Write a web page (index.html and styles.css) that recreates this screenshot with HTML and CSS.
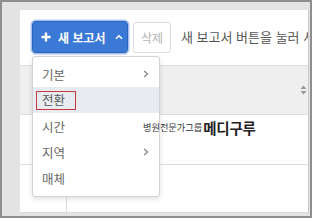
FILE: index.html
```html
<!DOCTYPE html>
<html lang="ko">
<head>
<meta charset="utf-8">
<link rel="stylesheet" href="styles.css">
</head>
<body>
<div class="frame">
  <div class="panel">
    <div class="toolbar">
      <div class="btn-wrap">
        <button class="btn-primary">
          <svg class="ico-plus" width="10" height="10" viewBox="0 0 10 10"><path d="M5 0.5V9.5M0.5 5H9.5" stroke="#fff" stroke-width="2.4"/></svg>
          <span>새 보고서</span>
          <svg class="ico-up" width="8" height="6" viewBox="0 0 8 6"><path d="M1 4.8L4 1.8L7 4.8" fill="none" stroke="#fff" stroke-width="1.6"/></svg>
        </button>
        <ul class="menu">
          <li class="item">기본<svg class="ico-right" width="6" height="8" viewBox="0 0 6 8"><path d="M1.2 1L4.5 4L1.2 7" fill="none" stroke="#888" stroke-width="1.3"/></svg></li>
          <li class="item active"><span class="mark">전환</span></li>
          <li class="item">시간</li>
          <li class="item">지역<svg class="ico-right" width="6" height="8" viewBox="0 0 6 8"><path d="M1.2 1L4.5 4L1.2 7" fill="none" stroke="#888" stroke-width="1.3"/></svg></li>
          <li class="item">매체</li>
        </ul>
      </div>
      <button class="btn-delete">삭제</button>
      <span class="hint">새 보고서 버튼을 눌러 사용하세요</span>
    </div>
    <div class="thead">
      <svg class="ico-sort" width="7" height="10" viewBox="0 0 7 10"><path d="M3.5 0.5L6.5 4H0.5Z M3.5 9.5L6.5 6H0.5Z" fill="#999"/></svg>
    </div>
    <div class="row row-first">
      <div class="cell-a"></div>
      <div class="cell-b"><span class="logo"><span class="logo-sub">병원전문가그룹</span><span class="logo-main">메디구루</span></span></div>
    </div>
    <div class="row row-last">
      <div class="cell-a"></div>
      <div class="cell-b"></div>
    </div>
  </div>
</div>
</body>
</html>
```
FILE: styles.css
```css
* { box-sizing: border-box; }
html, body { margin: 0; padding: 0; background: #fff; }
body {
  width: 314px;
  height: 221px;
  overflow: hidden;
  font-family: "Noto Sans CJK KR", "Noto Sans", sans-serif;
}
.frame {
  width: 312px;
  height: 218px;
  border: 2px solid #8e8e8e;
  background: #e3e3e3;
  padding: 8px 1px 3px 18px;
  display: flex;
}
.panel {
  flex: 1;
  min-width: 0;
  background: #fff;
  display: flex;
  flex-direction: column;
  border-right: 1px solid #c9c9c9;
  overflow: hidden;
}
.toolbar {
  height: 55px;
  flex: none;
  display: flex;
  align-items: flex-start;
  padding: 11px 0 0 12px;
  white-space: nowrap;
}
.btn-wrap { position: relative; flex: none; }
.btn-primary {
  height: 32px;
  width: 96px;
  margin: 0;
  padding: 0 0 0 8px;
  border: 1px solid #2c64bd;
  border-radius: 4px;
  background: #3a79d6;
  color: #fff;
  font-family: inherit;
  font-size: 12px;
  font-weight: 700;
  display: flex;
  align-items: center;
  box-shadow: 0 0 0 1.5px #a9c3ee;
}
.ico-plus { margin-right: 7px; }
.ico-up { margin-left: 9px; }
.menu {
  position: absolute;
  left: 0;
  top: 35px;
  width: 128px;
  margin: 0;
  padding: 4px 0 5px;
  list-style: none;
  background: #fff;
  border: 1px solid #d4d4d4;
  border-radius: 3px;
  box-shadow: 0 2px 5px rgba(0,0,0,0.12);
  z-index: 1;
}
.item {
  height: 26px;
  display: flex;
  align-items: center;
  justify-content: space-between;
  padding: 0 10px 0 9px;
  font-size: 12.5px;
  color: #666;
}
.item.active { background: #e8ebef; padding-left: 3px; }
.mark {
  border: 1.5px solid #c9363d;
  padding: 0 5px;
  height: 19px;
  width: 40px;
  line-height: 16px;
  color: #555;
}
.btn-delete {
  flex: none;
  margin: 1px 0 0 5px;
  height: 31px;
  width: 38px;
  padding: 0;
  border: 1px solid #dcdcdc;
  border-radius: 3px;
  background: #fff;
  color: #b4b4b4;
  font-family: inherit;
  font-size: 12px;
}
.hint {
  flex: none;
  margin-left: 10px;
  line-height: 32px;
  font-size: 13px;
  color: #555;
}
.thead {
  height: 50px;
  flex: none;
  border-top: 1px solid #dedede;
  border-bottom: 1px solid #dedede;
  background: #efefef;
  display: flex;
  align-items: center;
  justify-content: flex-end;
  padding-right: 1px;
}
.row {
  display: flex;
  border-bottom: 1px solid #dcdcdc;
}
.row-first { height: 50px; flex: none; }
.row-last { height: 48px; flex: none; }
.cell-a { width: 47px; border-right: 1px solid #dcdcdc; flex: none; }
.cell-b { flex: 1; display: flex; align-items: flex-start; padding: 5px 0 0 76px; }
.logo {
  position: relative;
  z-index: 2;
  display: flex;
  align-items: center;
  height: 15px;
  line-height: 15px;
  color: #222;
}
.logo-sub { font-size: 9.2px; margin-right: 1px; color: #333; }
.logo-main { font-size: 14.5px; font-weight: 700; letter-spacing: -0.2px; }
```
